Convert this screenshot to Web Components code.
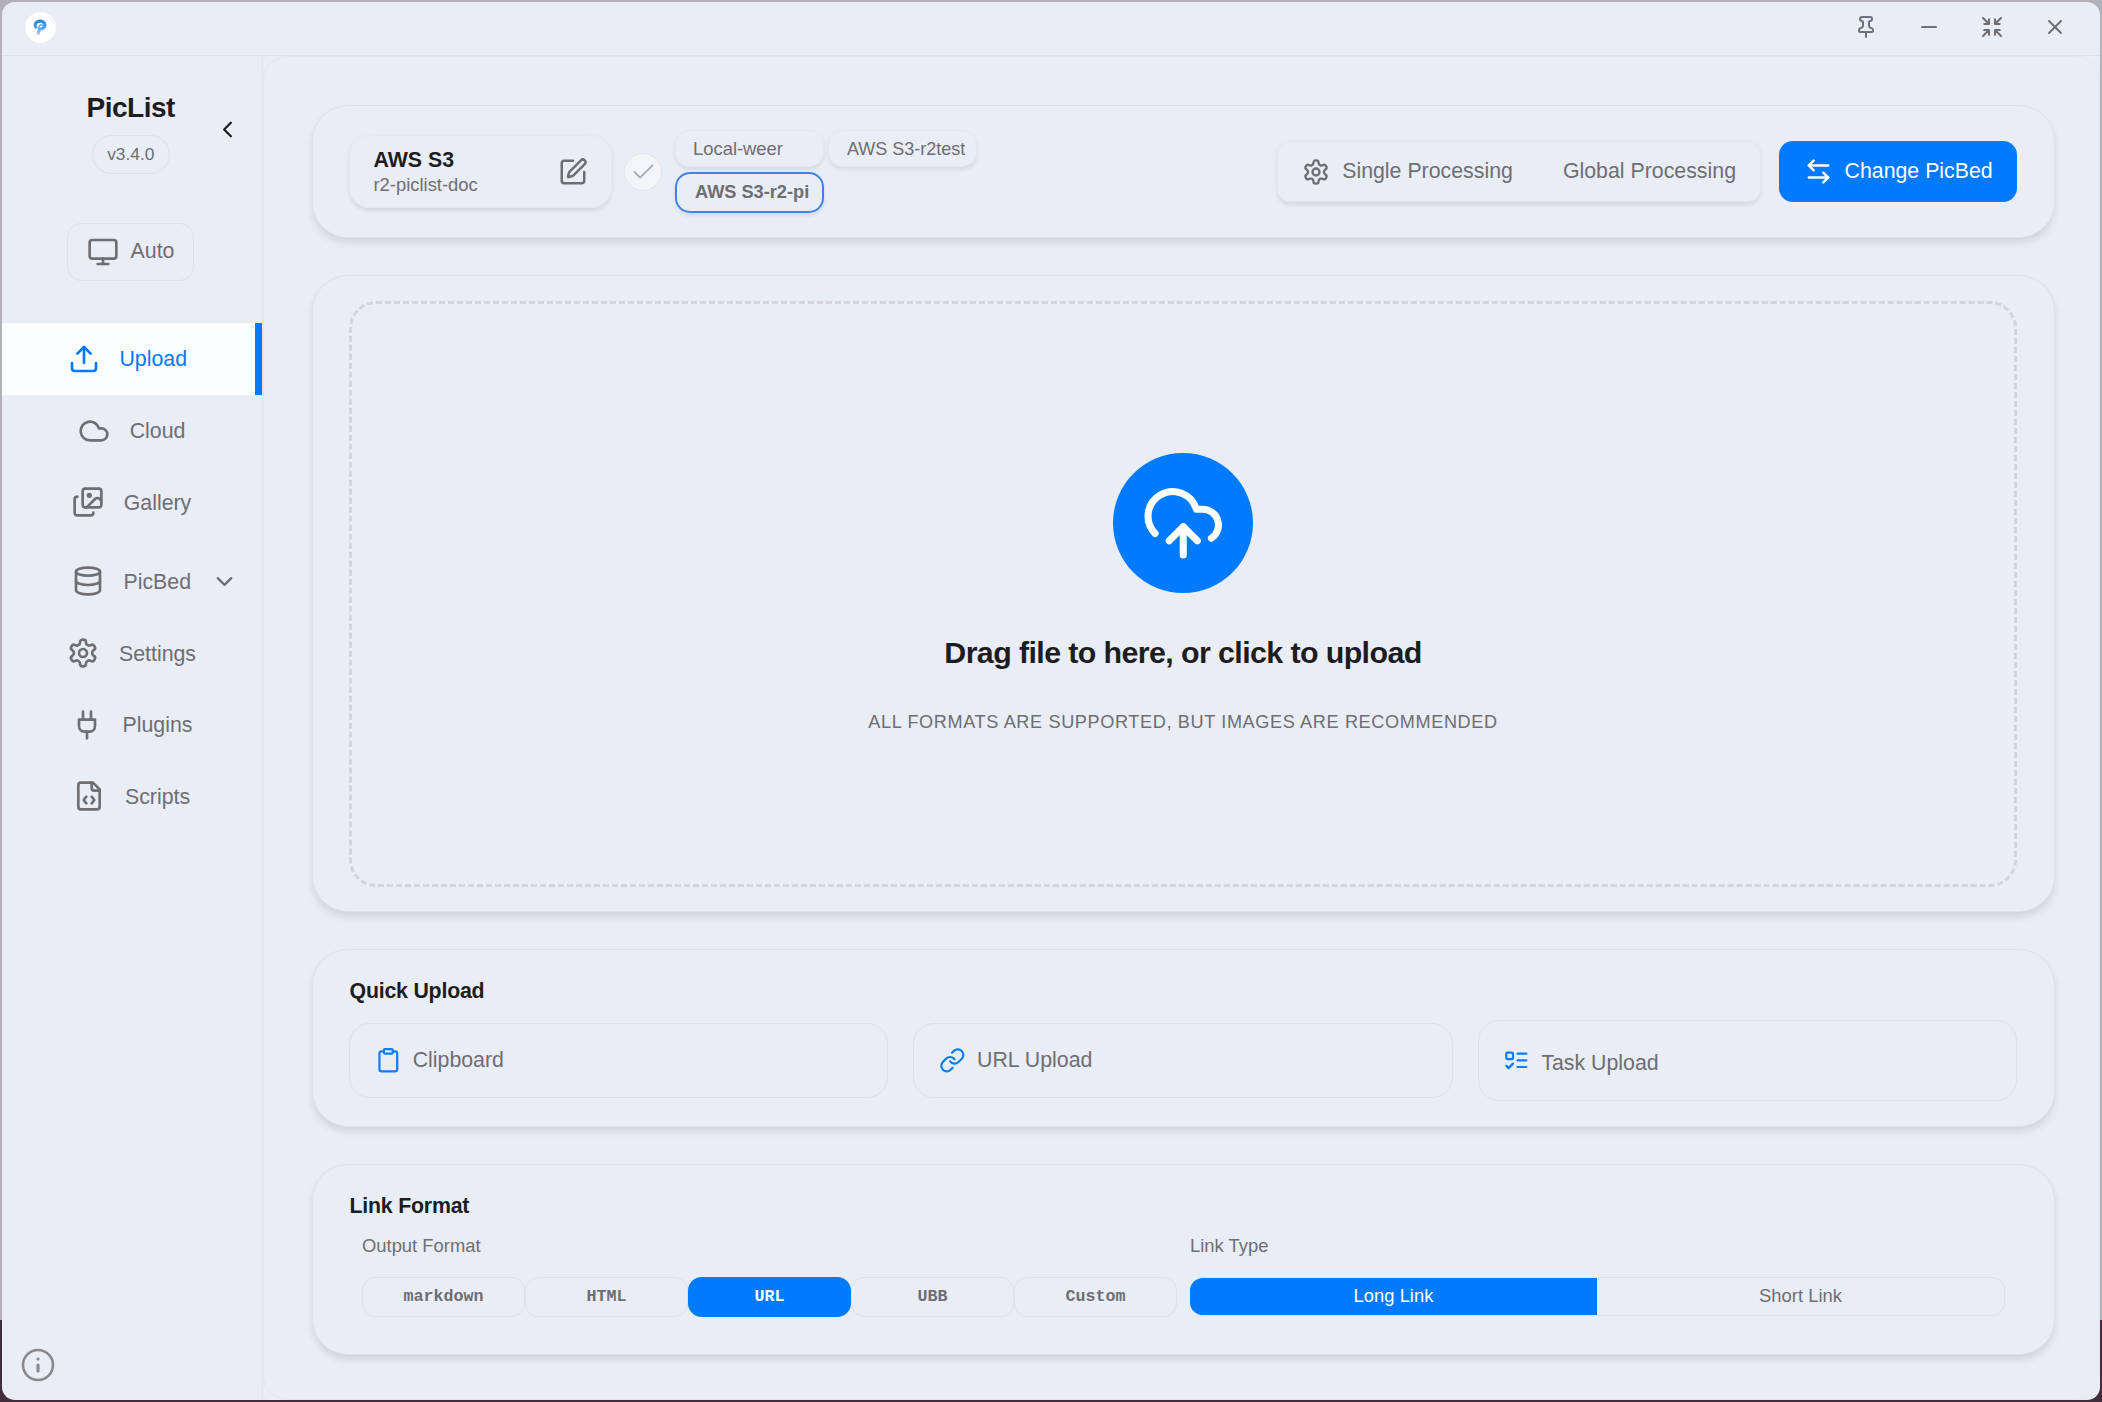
<!DOCTYPE html>
<html lang="en">
<head>
<meta charset="UTF-8">
<title>PicList</title>
<style>
  :root {
    --bg: #e9edf6;
    --line: #dfe1e8;
    --text: #1d1d1f;
    --muted: #6e6e73;
    --accent: #007aff;
  }
  html, body {
    margin: 0;
    height: 100%;
    overflow: hidden;
  }
  body {
    box-sizing: border-box;
    padding: 2px;
    background: linear-gradient(to bottom, #b1b1b7 0, #b1b1b7 1320px, #432d3d 1320px);
    font-family: "Liberation Sans", Arial, sans-serif;
    font-size: 21.33px;
    color: var(--muted);
  }
</style>
</head>
<body>
<pic-app></pic-app>

<script>
const ICONS = {
  pin: '<path d="M12 17v5"/><path d="M9 10.76a2 2 0 0 1-1.11 1.79l-1.78.9A2 2 0 0 0 5 15.24V16a1 1 0 0 0 1 1h12a1 1 0 0 0 1-1v-.76a2 2 0 0 0-1.11-1.79l-1.78-.9A2 2 0 0 1 15 10.76V7a1 1 0 0 1 1-1 2 2 0 0 0 0-4H8a2 2 0 0 0 0 4 1 1 0 0 1 1 1z"/>',
  minus: '<path d="M5 12h14"/>',
  shrink: '<path d="m15 15 6 6m-6-6v4.8m0-4.8h4.8"/><path d="M9 19.8V15m0 0H4.2M9 15l-6 6"/><path d="M15 4.2V9m0 0h4.8M15 9l6-6"/><path d="M9 4.2V9m0 0H4.2M9 9 3 3"/>',
  close: '<path d="M18 6 6 18"/><path d="m6 6 12 12"/>',
  left: '<path d="m15 18-6-6 6-6"/>',
  down: '<path d="m6 9 6 6 6-6"/>',
  monitor: '<rect width="20" height="14" x="2" y="3" rx="2"/><path d="M8 21h8"/><path d="M12 17v4"/>',
  upload: '<path d="M12 3v12"/><path d="m17 8-5-5-5 5"/><path d="M21 15v4a2 2 0 0 1-2 2H5a2 2 0 0 1-2-2v-4"/>',
  cloud: '<path d="M17.5 19H9a7 7 0 1 1 6.71-9h1.79a4.5 4.5 0 1 1 0 9Z"/>',
  images: '<path d="m22 11-1.296-1.296a2.4 2.4 0 0 0-3.408 0L11 16"/><path d="M4 8a2 2 0 0 0-2 2v10a2 2 0 0 0 2 2h10a2 2 0 0 0 2-2"/><circle cx="13" cy="7" r="1" fill="currentColor"/><rect x="8" y="2" width="14" height="14" rx="2"/>',
  database: '<ellipse cx="12" cy="5" rx="9" ry="3"/><path d="M3 5v14a9 3 0 0 0 18 0V5"/><path d="M3 12a9 3 0 0 0 18 0"/>',
  settings: '<path d="M12.22 2h-.44a2 2 0 0 0-2 2v.18a2 2 0 0 1-1 1.73l-.43.25a2 2 0 0 1-2 0l-.15-.08a2 2 0 0 0-2.73.73l-.22.38a2 2 0 0 0 .73 2.73l.15.1a2 2 0 0 1 1 1.72v.51a2 2 0 0 1-1 1.74l-.15.09a2 2 0 0 0-.73 2.73l.22.38a2 2 0 0 0 2.73.73l.15-.08a2 2 0 0 1 2 0l.43.25a2 2 0 0 1 1 1.73V20a2 2 0 0 0 2 2h.44a2 2 0 0 0 2-2v-.18a2 2 0 0 1 1-1.73l.43-.25a2 2 0 0 1 2 0l.15.08a2 2 0 0 0 2.73-.73l.22-.39a2 2 0 0 0-.73-2.73l-.15-.08a2 2 0 0 1-1-1.74v-.5a2 2 0 0 1 1-1.74l.15-.09a2 2 0 0 0 .73-2.73l-.22-.38a2 2 0 0 0-2.73-.73l-.15.08a2 2 0 0 1-2 0l-.43-.25a2 2 0 0 1-1-1.73V4a2 2 0 0 0-2-2z"/><circle cx="12" cy="12" r="3"/>',
  plug: '<path d="M12 22v-5"/><path d="M9 8V2"/><path d="M15 8V2"/><path d="M18 8v5a4 4 0 0 1-4 4h-4a4 4 0 0 1-4-4V8Z"/>',
  script: '<path d="M10 12.5 8 15l2 2.5"/><path d="m14 12.5 2 2.5-2 2.5"/><path d="M14 2v4a2 2 0 0 0 2 2h4"/><path d="M15 2H6a2 2 0 0 0-2 2v16a2 2 0 0 0 2 2h12a2 2 0 0 0 2-2V7z"/>',
  info: '<circle cx="12" cy="12" r="10"/><path d="M12 16v-4" stroke-width="2.1"/><path d="M12 8h.01" stroke-width="2.1"/>',
  edit: '<path d="M12 3H5a2 2 0 0 0-2 2v14a2 2 0 0 0 2 2h14a2 2 0 0 0 2-2v-7"/><path d="M18.375 2.625a1 1 0 0 1 3 3l-9.013 9.014a2 2 0 0 1-.853.505l-2.873.84a.5.5 0 0 1-.62-.62l.84-2.873a2 2 0 0 1 .506-.852z"/>',
  check: '<path d="M4 12.4l5 5L20 6.6"/>',
  swap: '<path d="M8 3 4 7l4 4"/><path d="M4 7h16"/><path d="m16 21 4-4-4-4"/><path d="M20 17H4"/>',
  cloudUpload: '<path d="M12 13v8"/><path d="M4 14.899A7 7 0 1 1 15.71 8h1.79a4.5 4.5 0 0 1 2.5 8.242"/><path d="m8 17 4-4 4 4"/>',
  clipboard: '<rect width="8" height="4" x="8" y="2" rx="1"/><path d="M16 4h2a2 2 0 0 1 2 2v14a2 2 0 0 1-2 2H6a2 2 0 0 1-2-2V6a2 2 0 0 1 2-2h2"/>',
  link: '<path d="M10 13a5 5 0 0 0 7.54.54l3-3a5 5 0 0 0-7.07-7.07l-1.72 1.71"/><path d="M14 11a5 5 0 0 0-7.54-.54l-3 3a5 5 0 0 0 7.07 7.07l1.71-1.71"/>',
  tasks: '<rect x="3" y="5" width="6" height="6" rx="1"/><path d="m3 17 2 2 4-4"/><path d="M13 6h8"/><path d="M13 12h8"/><path d="M13 18h8"/>'
};

// Small helper: open shadow root + markup
class BaseElement extends HTMLElement {
  connectedCallback() {
    if (!this.shadowRoot) {
      this.attachShadow({ mode: "open" });
    }
    this.shadowRoot.innerHTML = this.render();
  }
}

class PicIcon extends BaseElement {
  render() {
    const size = this.getAttribute("size") || 24;
    const stroke = this.getAttribute("stroke") || 2;
    return `
      <style>
        :host { display: block; flex: none; width: ${size}px; height: ${size}px; }
        svg { display: block; width: 100%; height: 100%; }
      </style>
      <svg viewBox="0 0 24 24" fill="none" stroke="currentColor" stroke-width="${stroke}"
        stroke-linecap="round" stroke-linejoin="round">${ICONS[this.getAttribute("name")]}</svg>
    `;
  }
}

class PicTitlebar extends BaseElement {
  render() {
    return `
      <style>
        :host {
          display: flex;
          align-items: center;
          justify-content: space-between;
          box-sizing: border-box;
          height: 54px;
          padding: 0 33px 3px 22.5px;
          border-bottom: 1px solid var(--line);
        }
        .logo { display: block; width: 31px; height: 31px; }
        .controls { display: flex; gap: 39px; }
      </style>
      <svg class="logo" viewBox="0 0 31 31">
        <defs>
          <linearGradient id="g" gradientUnits="userSpaceOnUse" x1="0" y1="8" x2="0" y2="22">
            <stop offset="0" stop-color="#2b7fd0"/>
            <stop offset=".5" stop-color="#4a9bf0"/>
            <stop offset="1" stop-color="#a9c8fb"/>
          </linearGradient>
        </defs>
        <circle cx="15.5" cy="15.5" r="15.3" fill="#fff"/>
        <path d="M11 15.4A4.9 4 0 1 1 16.6 16.9L14.6 17.2L13.3 21.2" fill="none" stroke="url(#g)" stroke-width="3.2" stroke-linecap="round" stroke-linejoin="round"/>
        <path d="M13.6 16.4L14.8 13.2A1.7 1.5 0 0 1 17.6 13.6" fill="none" stroke="#57b4f2" stroke-width="1.5" stroke-linecap="round"/>
        <path d="M23.5 4.5Q27.2 7 28.2 11.5" fill="none" stroke="#d3f1fb" stroke-width="1"/>
      </svg>
      <div class="controls">
        <pic-icon name="pin" style="color:#6b7080"></pic-icon>
        <pic-icon name="minus"></pic-icon>
        <pic-icon name="shrink"></pic-icon>
        <pic-icon name="close"></pic-icon>
      </div>
    `;
  }
}

class PicNavItem extends BaseElement {
  render() {
    return `
      <style>
        :host {
          display: flex;
          align-items: center;
          justify-content: center;
          gap: 19.5px;
          box-sizing: border-box;
          height: 71.7px;
          padding-right: 0.5px;
        }
        :host([active]) {
          padding-right: 2px;
          background: #fcfdff;
          color: var(--accent);
          border-right: 7px solid var(--accent);
        }
        :host([submenu]) { margin-top: 7.5px; }
        span { padding-top: 2px; }
        .arrow { margin-right: -46px; }
      </style>
      <pic-icon name="${this.getAttribute("icon")}" size="32"></pic-icon>
      <span><slot></slot></span>
      ${this.hasAttribute("submenu") ? '<pic-icon class="arrow" name="down" size="27"></pic-icon>' : ""}
    `;
  }
}

class PicSidebar extends BaseElement {
  render() {
    return `
      <style>
        :host {
          display: flex;
          flex-direction: column;
          box-sizing: border-box;
          width: 261px;
          border-right: 1px solid #e3e4ec;
        }
        .brand {
          display: grid;
          grid-template-columns: 1fr auto 1fr;
          align-items: center;
          padding: 36px 2.5px 0 0;
        }
        .name { display: flex; flex-direction: column; align-items: center; }
        h1 {
          margin: 0;
          font-size: 28px;
          line-height: 32px;
          letter-spacing: -0.5px;
          color: var(--text);
        }
        .version {
          box-sizing: border-box;
          width: 78px;
          height: 39px;
          margin-top: 11px;
          border: 1px solid var(--line);
          border-radius: 20px;
          font-size: 17.33px;
          line-height: 36px;
          text-align: center;
        }
        .fold {
          justify-self: end;
          margin: 0 19px 7px 0;
          color: var(--text);
        }
        .theme {
          display: flex;
          align-items: center;
          justify-content: center;
          gap: 12px;
          box-sizing: border-box;
          width: 127px;
          height: 58px;
          margin: 49px 0 42px 65px;
          padding-bottom: 1px;
          border: 1px solid var(--line);
          border-radius: 14px;
        }
        .spacer { flex: 1; }
        .info { margin: 0 0 17px 18px; color: #88888c; }
      </style>
      <div class="brand">
        <span></span>
        <div class="name">
          <h1>PicList</h1>
          <div class="version">v3.4.0</div>
        </div>
        <pic-icon class="fold" name="left" size="27"></pic-icon>
      </div>
      <div class="theme"><pic-icon name="monitor" size="32"></pic-icon>Auto</div>
      <nav>
        <pic-nav-item icon="upload" active>Upload</pic-nav-item>
        <pic-nav-item icon="cloud">Cloud</pic-nav-item>
        <pic-nav-item icon="images">Gallery</pic-nav-item>
        <pic-nav-item icon="database" submenu>PicBed</pic-nav-item>
        <pic-nav-item icon="settings">Settings</pic-nav-item>
        <pic-nav-item icon="plug">Plugins</pic-nav-item>
        <pic-nav-item icon="script">Scripts</pic-nav-item>
      </nav>
      <div class="spacer"></div>
      <pic-icon class="info" name="info" size="36" stroke="1.7"></pic-icon>
    `;
  }
}

class PicCard extends BaseElement {
  render() {
    const heading = this.getAttribute("heading");
    return `
      <style>
        :host {
          display: block;
          box-sizing: border-box;
          padding: 25px 37px 0 36px;
          border: 1px solid var(--line);
          border-radius: 36px;
          background: var(--bg);
          box-shadow: 0 5.5px 9px -1.5px rgba(0, 0, 0, 0.12);
        }
        h2 {
          margin: 0 0 0 0.5px;
          font-size: 21.33px;
          line-height: 32px;
          letter-spacing: -0.01em;
          color: var(--text);
        }
      </style>
      ${heading ? `<h2>${heading}</h2>` : ""}
      <slot></slot>
    `;
  }
}

class PicHeader extends BaseElement {
  render() {
    return `
      <style>
        :host {
          display: flex;
          align-items: center;
          height: 100%;
        }
        .current, .process {
          box-sizing: border-box;
          border: 1px solid #e6e8ef;
          box-shadow: 0 2.5px 4px rgba(0, 0, 0, 0.09);
        }
        .current {
          display: flex;
          align-items: center;
          justify-content: space-between;
          width: 263px;
          height: 73px;
          padding: 0 23.5px 0 23.5px;
          border-radius: 21px;
        }
        .current strong {
          display: block;
          padding-top: 1px;
          line-height: 26px;
          color: var(--text);
        }
        .current span {
          display: block;
          font-size: 18.4px;
          line-height: 24px;
        }
        .check {
          display: grid;
          place-items: center;
          box-sizing: border-box;
          width: 38px;
          height: 38px;
          margin: 0 13px 0 12px;
          border: 1px solid #e4e5ea;
          border-radius: 50%;
          background: #f4f5f9;
          color: #a9aaae;
        }
        .chips {
          display: grid;
          grid-template-columns: 149px 149px;
          gap: 5px 4px;
        }
        .chip {
          box-sizing: border-box;
          height: 37px;
          padding: 0 0 0 17px;
          border: 1px solid #e6e8ef;
          border-radius: 15px;
          box-shadow: 0 2.5px 4px rgba(0, 0, 0, 0.09);
          font-size: 18.4px;
          line-height: 36px;
        }
        .chip span {
          display: block;
          width: 119px;
          overflow: hidden;
          white-space: nowrap;
        }
        .chip.wide { padding-left: 18px; font-size: 18px; }
        .chip.wide span { width: 118px; }
        .chip.on {
          height: 41px;
          padding-left: 18px;
          border: 2px solid #3f83e8;
          font-size: 18.2px;
          font-weight: bold;
          line-height: 37px;
        }
        .chip.on span { width: 116px; }
        .process {
          display: flex;
          align-items: center;
          height: 61px;
          margin-left: auto;
          padding: 0 24px;
          border-radius: 14px;
        }
        .process pic-icon { margin-right: 12.5px; }
        .process span + span { margin-left: 50px; }
        .change {
          display: flex;
          align-items: center;
          gap: 11.5px;
          box-sizing: border-box;
          width: 238px;
          height: 61px;
          margin-left: 18px;
          padding-left: 25px;
          border-radius: 14px;
          background: var(--accent);
          color: #fff;
        }
      </style>
      <div class="current">
        <div>
          <strong>AWS S3</strong>
          <span>r2-piclist-doc</span>
        </div>
        <pic-icon name="edit" size="30"></pic-icon>
      </div>
      <div class="check"><pic-icon name="check" size="27" stroke="1.6"></pic-icon></div>
      <div class="chips">
        <div class="chip"><span>Local-weer</span></div>
        <div class="chip wide"><span>AWS S3-r2test</span></div>
        <div class="chip on"><span>AWS S3-r2-pi</span></div>
      </div>
      <div class="process">
        <pic-icon name="settings" size="28"></pic-icon>
        <span>Single Processing</span>
        <span>Global Processing</span>
      </div>
      <div class="change"><pic-icon name="swap" size="29"></pic-icon>Change PicBed</div>
    `;
  }
}

class PicDropzone extends BaseElement {
  render() {
    return `
      <style>
        :host {
          display: flex;
          flex-direction: column;
          align-items: center;
          box-sizing: border-box;
          height: 586px;
          padding-top: 149px;
          border: 3px dashed #d3d5da;
          border-radius: 27px;
        }
        .bubble {
          display: grid;
          place-items: center;
          width: 140px;
          height: 140px;
          border-radius: 50%;
          background: var(--accent);
          color: #fff;
        }
        .title {
          margin-top: 39px;
          font-size: 30.4px;
          font-weight: bold;
          line-height: 40px;
          letter-spacing: -0.02em;
          color: var(--text);
        }
        .hint {
          margin-top: 36px;
          font-size: 18.13px;
          line-height: 28px;
          letter-spacing: 0.63px;
          text-transform: uppercase;
        }
      </style>
      <div class="bubble"><pic-icon name="cloudUpload" size="84.5"></pic-icon></div>
      <div class="title">Drag file to here, or click to upload</div>
      <div class="hint">All formats are supported, but images are recommended</div>
    `;
  }
}

class PicQuickButton extends BaseElement {
  render() {
    return `
      <style>
        :host {
          display: flex;
          align-items: center;
          gap: 11.5px;
          box-sizing: border-box;
          height: 75px;
          padding: 0 24.5px;
          border: 1px solid var(--line);
          border-radius: 21px;
        }
        :host([tall]) { height: 81px; }
        :host([tall]) span { padding-top: 6px; }
        pic-icon { color: #0f7df5; }
      </style>
      <pic-icon name="${this.getAttribute("icon")}" size="26.67"></pic-icon>
      <span><slot></slot></span>
    `;
  }
}

class PicQuickUpload extends BaseElement {
  render() {
    return `
      <style>
        :host {
          display: grid;
          grid-template-columns: repeat(3, 1fr);
          align-items: center;
          gap: 25px;
          margin-top: 13px;
        }
      </style>
      <pic-quick-button icon="clipboard">Clipboard</pic-quick-button>
      <pic-quick-button icon="link">URL Upload</pic-quick-button>
      <pic-quick-button icon="tasks" tall>Task Upload</pic-quick-button>
    `;
  }
}

class PicLinkFormat extends BaseElement {
  render() {
    const formats = ["markdown", "HTML", "URL", "UBB", "Custom"];
    const buttons = formats
      .map((f) => `<div class="format${f === "URL" ? " on" : ""}">${f}</div>`)
      .join("");
    return `
      <style>
        :host {
          display: grid;
          grid-template-columns: 815px 815px;
          gap: 13px;
          margin: 10px 0 0 13px;
          font-size: 18.4px;
        }
        label { display: block; line-height: 28px; margin-bottom: 17px; }
        .formats, .types { display: flex; }
        .format {
          flex: 1;
          box-sizing: border-box;
          height: 40px;
          border: 1px solid var(--line);
          border-radius: 13.33px;
          font: bold 16.67px/38px "Liberation Mono", "Courier New", monospace;
          text-align: center;
        }
        .format.on {
          border-color: var(--accent);
          background: var(--accent);
          color: #fff;
        }
        .types {
          box-sizing: border-box;
          height: 39px;
          border: 1px solid var(--line);
          border-left: 0;
          border-radius: 13.33px;
          overflow: hidden;
        }
        .types div { flex: 1; line-height: 36px; text-align: center; }
        .types .on { background: var(--accent); color: #fff; }
      </style>
      <div>
        <label>Output Format</label>
        <div class="formats">${buttons}</div>
      </div>
      <div>
        <label>Link Type</label>
        <div class="types">
          <div class="on">Long Link</div>
          <div>Short Link</div>
        </div>
      </div>
    `;
  }
}

class PicApp extends BaseElement {
  render() {
    return `
      <style>
        :host {
          display: flex;
          flex-direction: column;
          height: 100%;
          border-radius: 13px;
          background: var(--bg);
          overflow: hidden;
        }
        .body { display: flex; flex: 1; min-height: 0; }
        pic-sidebar { flex: none; }
        main {
          flex: 1;
          display: flex;
          flex-direction: column;
          gap: 37px;
          box-sizing: border-box;
          padding: 48px 44px 0 48px;
          border: 1px solid #e4e7ee;
          border-right-color: #e7eaf2;
          border-radius: 24px;
        }
        .header { height: 133px; padding-top: 0; padding-bottom: 0; }
        .drop { height: 637px; }
        .quick { height: 178px; }
        .format { height: 191px; }
      </style>
      <pic-titlebar></pic-titlebar>
      <div class="body">
        <pic-sidebar></pic-sidebar>
        <main>
          <pic-card class="header"><pic-header></pic-header></pic-card>
          <pic-card class="drop"><pic-dropzone></pic-dropzone></pic-card>
          <pic-card class="quick" heading="Quick Upload"><pic-quick-upload></pic-quick-upload></pic-card>
          <pic-card class="format" heading="Link Format"><pic-link-format></pic-link-format></pic-card>
        </main>
      </div>
    `;
  }
}

customElements.define("pic-icon", PicIcon);
customElements.define("pic-titlebar", PicTitlebar);
customElements.define("pic-nav-item", PicNavItem);
customElements.define("pic-sidebar", PicSidebar);
customElements.define("pic-card", PicCard);
customElements.define("pic-header", PicHeader);
customElements.define("pic-dropzone", PicDropzone);
customElements.define("pic-quick-button", PicQuickButton);
customElements.define("pic-quick-upload", PicQuickUpload);
customElements.define("pic-link-format", PicLinkFormat);
customElements.define("pic-app", PicApp);
</script>
</body>
</html>
